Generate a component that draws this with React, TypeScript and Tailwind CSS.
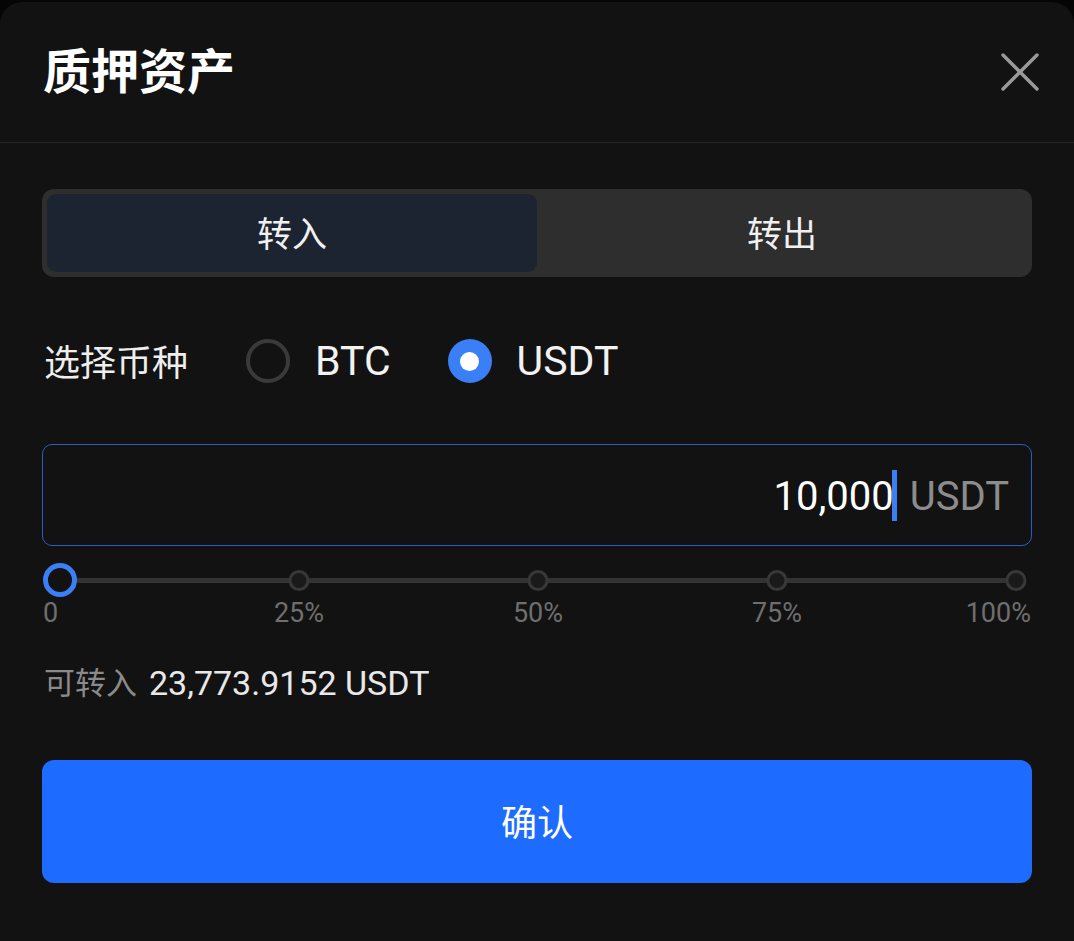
import { useState } from "react";

const FONT = "font-['Roboto','Noto_Sans_CJK_SC',sans-serif]";

const marks = [
  { pct: 0, label: "0" },
  { pct: 25, label: "25%" },
  { pct: 50, label: "50%" },
  { pct: 75, label: "75%" },
  { pct: 100, label: "100%" },
];

function Radio({ checked, label, onClick }: { checked: boolean; label: string; onClick: () => void }) {
  return (
    <button onClick={onClick} className="flex items-center gap-[25px]">
      {checked ? (
        <span className="flex h-[44px] w-[44px] items-center justify-center rounded-full bg-[#3a7ff6]">
          <span className="h-[19px] w-[19px] rounded-full bg-white" />
        </span>
      ) : (
        <span className="h-[44px] w-[44px] rounded-full border-[4px] border-[#3a3a3a]" />
      )}
      <span className="text-[41px] leading-none text-[#f2f2f2]">{label}</span>
    </button>
  );
}

export default function App() {
  const [tab, setTab] = useState<"in" | "out">("in");
  const [coin, setCoin] = useState<"BTC" | "USDT">("USDT");

  return (
    <div className={`min-h-[941px] w-full bg-[#050505] pt-[2px] ${FONT}`}>
      <div className="min-h-[939px] rounded-t-[22px] bg-[#121212]">
        {/* header */}
        <div className="flex h-[141px] items-center justify-between border-b border-[#262626] pl-[43px] pr-[34px]">
          <h1 className="pt-[2px] text-[48px] font-bold leading-none text-white">质押资产</h1>
          <button className="flex h-[40px] w-[40px] items-center justify-center">
            <svg width="38" height="38" viewBox="0 0 38 38" fill="none">
              <path d="M2 2L36 36M36 2L2 36" stroke="#9a9a9a" strokeWidth="3.4" strokeLinecap="round" />
            </svg>
          </button>
        </div>

        <div className="px-[42px]">
          {/* tabs */}
          <div className="mt-[46px] flex h-[88px] rounded-[12px] bg-[#2e2e2e] p-[5px]">
            <button
              onClick={() => setTab("in")}
              className={`flex flex-1 items-center justify-center rounded-[9px] pt-[6px] text-[35px] text-[#f0f0f0] ${tab === "in" ? "bg-[#1d2431]" : ""}`}
            >
              转入
            </button>
            <button
              onClick={() => setTab("out")}
              className={`flex flex-1 items-center justify-center rounded-[9px] pt-[6px] text-[35px] text-[#f0f0f0] ${tab === "out" ? "bg-[#1d2431]" : ""}`}
            >
              转出
            </button>
          </div>

          {/* coin select */}
          <div className="mt-[62px] flex h-[44px] items-center">
            <span className="mr-[58px] pl-[2px] pt-[5px] text-[36px] leading-none text-[#eeeeee]">选择币种</span>
            <div className="flex items-center gap-[57px]">
              <Radio checked={coin === "BTC"} label="BTC" onClick={() => setCoin("BTC")} />
              <Radio checked={coin === "USDT"} label="USDT" onClick={() => setCoin("USDT")} />
            </div>
          </div>

          {/* amount input */}
          <div className="mt-[61px] flex h-[102px] items-center justify-end rounded-[10px] border border-[#2b5ec0] pr-[22px]">
            <span className="pt-[4px] text-[40px] leading-none text-white">10,000</span>
            <span className="h-[51px] w-[5px] -translate-x-[2px] bg-[#3b7ef6]" />
            <span className="ml-[11px] pt-[4px] text-[40px] leading-none text-[#8c8c8c]">USDT</span>
          </div>

          {/* slider */}
          <div className="ml-[18px] mr-[16px] mt-[17px]">
            <div className="relative h-[34px]">
              <div className="absolute left-0 right-0 top-[15px] h-[5px] rounded-full bg-[#333333]" />
              {marks.map((m) =>
                m.pct === 0 ? (
                  <span
                    key={m.pct}
                    className="absolute top-0 h-[34px] w-[34px] -translate-x-1/2 rounded-full border-[5px] border-[#3a7ff6] bg-[#121212]"
                    style={{ left: `${m.pct}%` }}
                  />
                ) : (
                  <span
                    key={m.pct}
                    className="absolute top-[7px] h-[21px] w-[21px] -translate-x-1/2 rounded-full border-[3px] border-[#383838] bg-[#1a1a1a]"
                    style={{ left: `${m.pct}%` }}
                  />
                )
              )}
            </div>
            <div className="relative mt-[1px] h-[30px] text-[27px] leading-[30px] text-[#6e6e6e]">
              {marks.map((m) => (
                <span
                  key={m.pct}
                  className={`absolute top-0 ${m.pct === 0 ? "-left-[17px]" : m.pct === 100 ? "-right-[15px]" : "-translate-x-1/2"}`}
                  style={m.pct === 0 || m.pct === 100 ? undefined : { left: `${m.pct}%` }}
                >
                  {m.label}
                </span>
              ))}
            </div>
          </div>

          {/* available */}
          <div className="mt-[38px] flex items-center gap-[12px] pl-[2px] leading-none">
            <span className="text-[31px] text-[#8a8a8a]">可转入</span>
            <span className="text-[34px] text-[#e8e8e8]">23,773.9152 USDT</span>
          </div>

          {/* confirm */}
          <button className="mt-[60px] flex h-[123px] w-full items-center justify-center rounded-[12px] bg-[#1e6bff] pt-[4px] text-[36px] text-white">
            确认
          </button>
        </div>
      </div>
    </div>
  );
}
